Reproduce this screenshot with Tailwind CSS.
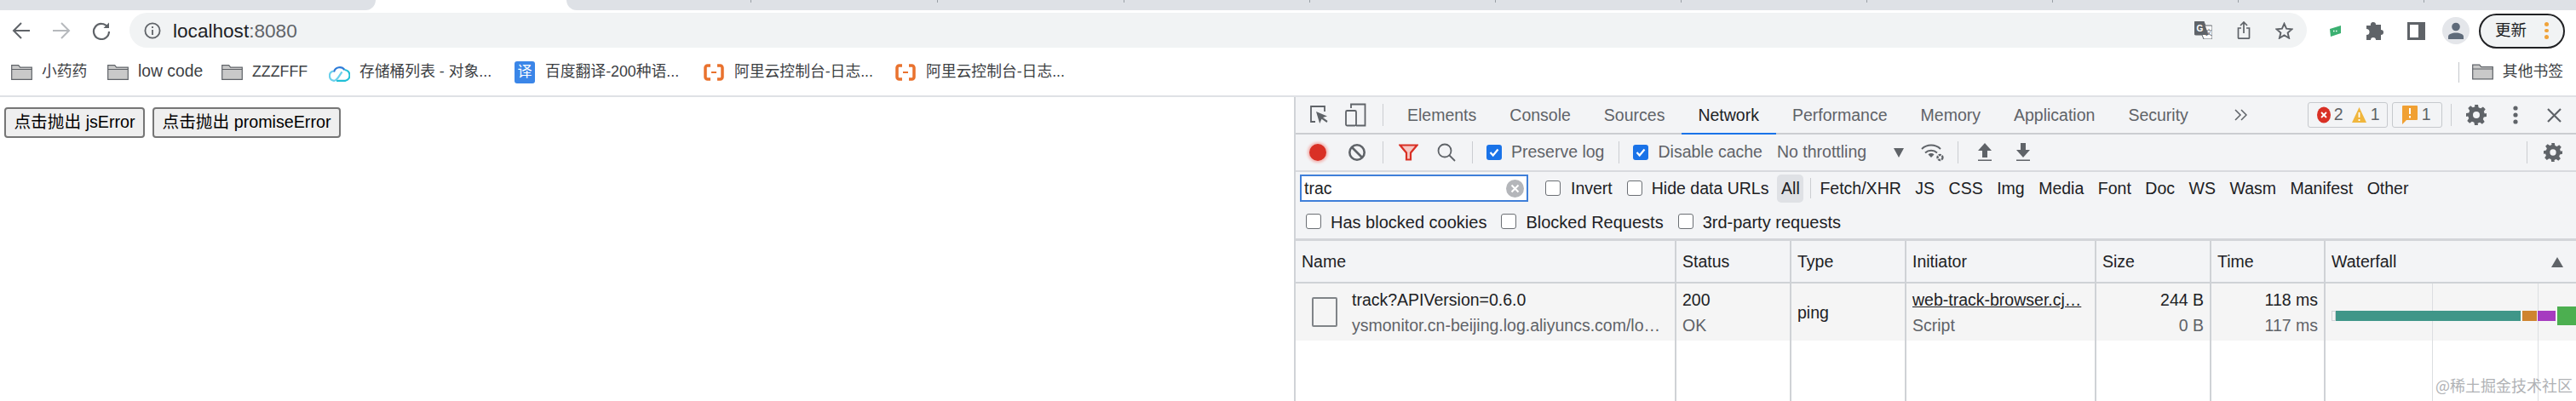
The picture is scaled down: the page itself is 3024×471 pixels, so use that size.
<!DOCTYPE html>
<html lang="zh">
<head>
<meta charset="utf-8">
<title>localhost:8080</title>
<script src="https://cdn.jsdelivr.net/npm/@tailwindcss/browser@4"></script>
</head>
<body class="w-[3024px] h-[471px] overflow-hidden bg-white font-['Liberation_Sans','Noto_Sans_CJK_SC',sans-serif] text-[#202124]">

<!-- tab strip -->
<div class="flex h-[12px] bg-white">
  <div class="w-[441px] bg-[#dee1e6] rounded-br-[14px]"></div>
  <div class="w-[224px]"></div>
  <div class="flex-1 flex bg-[#dee1e6] rounded-bl-[14px] overflow-hidden">
    <div class="w-[217px] h-[3px] shrink-0 border-r border-[#9aa0a6]"></div>
    <div class="w-[219px] h-[3px] shrink-0 border-r border-[#9aa0a6]"></div>
    <div class="w-[219px] h-[3px] shrink-0 border-r border-[#9aa0a6]"></div>
    <div class="w-[218px] h-[3px] shrink-0 border-r border-[#9aa0a6]"></div>
    <div class="w-[218px] h-[3px] shrink-0 border-r border-[#9aa0a6]"></div>
    <div class="w-[218px] h-[3px] shrink-0 border-r border-[#9aa0a6]"></div>
    <div class="w-[218px] h-[3px] shrink-0 border-r border-[#9aa0a6]"></div>
    <div class="w-[218px] h-[3px] shrink-0 border-r border-[#9aa0a6]"></div>
    <div class="w-[218px] h-[3px] shrink-0 border-r border-[#9aa0a6]"></div>
    <div class="w-[218px] h-[3px] shrink-0 border-r border-[#9aa0a6]"></div>
  </div>
</div>

<!-- toolbar -->
<div class="flex items-center h-[48px] pl-[14px]">
  <svg class="w-[22px] h-[22px] shrink-0" viewBox="0 0 22 22" fill="none" stroke="#5f6368" stroke-width="2"><path d="M21 11H2M11 2l-9 9 9 9"/></svg>
  <svg class="w-[22px] h-[22px] shrink-0 ml-[25px]" viewBox="0 0 22 22" fill="none" stroke="#b6b9bd" stroke-width="2"><path d="M1 11h19M11 2l9 9-9 9"/></svg>
  <svg class="w-[22px] h-[22px] shrink-0 ml-[25px]" viewBox="0 0 22 22" fill="none" stroke="#5f6368" stroke-width="2.2"><path d="M18.5 7A9 9 0 1 0 20 12"/><path d="M20 1.5V8h-6.5z" fill="#5f6368" stroke="none"/></svg>
  <!-- address bar -->
  <div class="flex items-center ml-[22px] w-[2556px] h-[41px] mt-[-1px] rounded-full bg-[#f1f3f4] pl-[17px]">
    <svg class="w-[20px] h-[20px] shrink-0" viewBox="0 0 20 20" fill="none" stroke="#5f6368" stroke-width="1.8"><circle cx="10" cy="10" r="8.6"/><path d="M10 9v6M10 5v2"/></svg>
    <div class="ml-[14px] pt-[2px] text-[22.6px]">localhost<span class="text-[#5f6368]">:8080</span></div>
    <svg class="w-[21px] h-[21px] shrink-0 ml-[2227px]" viewBox="0 0 21 21"><path d="M0 1.5A1.5 1.5 0 0 1 1.5 0H11l2 5H20a1 1 0 0 1 1 1v14a1 1 0 0 1-1 1H11l-2-5H1.500A1.500 1.500 0 0 1 0 14.500z" fill="#fff" stroke="#5f6368" stroke-width="1"/><path d="M0 1.500A1.500 1.500 0 0 1 1.500 0H11l5.500 16H1.500A1.500 1.500 0 0 1 0 14.500z" fill="#5f6368"/><text x="2.500" y="12" font-size="10" font-weight="700" fill="#fff" font-family="Liberation Sans">G</text><text x="13" y="16" font-size="8" fill="#5f6368" font-family="Noto Sans CJK SC">文</text></svg>
    <svg class="w-[16px] h-[21px] shrink-0 ml-[29px]" viewBox="0 0 16 21" fill="none" stroke="#5f6368" stroke-width="1.700"><path d="M5 8H1.500v11.500a.7.7 0 0 0 .7.7h11.600a.7.7 0 0 0 .7-.7V8H11"/><path d="M8 14V1.500M4 5l4-4 4 4"/></svg>
    <svg class="w-[21px] h-[20px] shrink-0 ml-[29px]" viewBox="0 0 21 20" fill="none" stroke="#5f6368" stroke-width="1.900"><path d="M10.500 1.800l2.600 5.900 6.300.6-4.800 4.200 1.500 6.200-5.600-3.300-5.600 3.300 1.500-6.200L1.600 8.300l6.300-.6z"/></svg>
  </div>
  <!-- extensions -->
  <svg class="w-[13px] h-[13px] shrink-0 ml-[27px]" viewBox="0 0 13 13"><path d="M0 4l13-4v9L1 13z" fill="#3bb071"/><path d="M4 6.500h1.500M7 6.500h1.500" stroke="#fff" stroke-width="1.300"/></svg>
  <svg class="w-[21px] h-[21px] shrink-0 ml-[30px]" viewBox="0 0 21 21"><path d="M8 0a3 3 0 0 1 3 3h6v6a3 3 0 0 1 0 6v6h-6a3 3 0 0 0-6 0H0v-6a3.500 3.500 0 0 0 0-7V4h5a3 3 0 0 1 3-4z" fill="#5f6368"/></svg>
  <svg class="w-[21px] h-[21px] shrink-0 ml-[27px]" viewBox="0 0 21 21"><path d="M0 0h21v21H0z" fill="#5f6368"/><path d="M3 3h10v15H3z" fill="#fff"/></svg>
  <div class="flex items-center justify-center w-[32px] h-[32px] ml-[20px] shrink-0 rounded-full bg-[#e4e6ea]">
    <svg class="w-[20px] h-[20px]" viewBox="0 0 20 20" fill="#5f6b7a"><circle cx="10" cy="5.500" r="4.800"/><path d="M1 20v-3c0-3 4.500-4.500 9-4.500s9 1.500 9 4.500v3z"/></svg>
  </div>
  <div class="flex items-center w-[101px] h-[41px] ml-[11px] shrink-0 rounded-full border-2 border-[#202124] bg-[#f1f3f4] pl-[17px]">
    <span class="text-[18.500px]">更新</span>
    <span class="flex flex-col gap-[3px] ml-[21px]">
      <span class="w-[4.500px] h-[4.500px] rounded-full bg-[#f0a33a]"></span>
      <span class="w-[4.500px] h-[4.500px] rounded-full bg-[#f0a33a]"></span>
      <span class="w-[4.500px] h-[4.500px] rounded-full bg-[#f0a33a]"></span>
    </span>
  </div>
</div>

<!-- bookmarks -->
<div class="flex items-center h-[54px] pl-[13px] pb-[3px] border-b-2 border-[#dfe1e5] text-[17.800px] text-[#3c4043]">
  <div class="flex items-center w-[113px] shrink-0 gap-[11px]">
    <svg class="w-[25px] h-[18px] shrink-0" viewBox="0 0 25 18"><path d="M.7 17.300V.7h8l2 2.500h13.600v14.100z" fill="#c9c9c9" stroke="#5f6368" stroke-width="1.200"/><path d="M1 5.500h23" stroke="#5f6368" stroke-width="1"/></svg>小药药
  </div>
  <div class="flex items-center w-[134px] shrink-0 gap-[11px]">
    <svg class="w-[25px] h-[18px] shrink-0" viewBox="0 0 25 18"><path d="M.7 17.300V.7h8l2 2.500h13.600v14.100z" fill="#c9c9c9" stroke="#5f6368" stroke-width="1.200"/><path d="M1 5.500h23" stroke="#5f6368" stroke-width="1"/></svg><span class="text-[19.300px]">low code</span>
  </div>
  <div class="flex items-center w-[126px] shrink-0 gap-[11px]">
    <svg class="w-[25px] h-[18px] shrink-0" viewBox="0 0 25 18"><path d="M.7 17.300V.7h8l2 2.500h13.600v14.100z" fill="#c9c9c9" stroke="#5f6368" stroke-width="1.200"/><path d="M1 5.500h23" stroke="#5f6368" stroke-width="1"/></svg>ZZZFFF
  </div>
  <div class="flex items-center w-[218px] shrink-0 gap-[11px]">
    <svg class="w-[25px] h-[22px] shrink-0" viewBox="0 0 25 22" fill="none" stroke-width="2.200"><path d="M6 10.500A7 7 0 0 1 18.500 8" stroke="#2d7bd8"/><path d="M18.500 8a6.500 6.500 0 0 1 1 12.800H9" stroke="#20bfd6"/><path d="M5 9.500A5.800 5.800 0 0 0 6 20.800c2.500 0 4-2 6.500-6l3-4.500" stroke="#6ad0ec"/></svg>存储桶列表 - 对象...
  </div>
  <div class="flex items-center w-[222px] shrink-0 gap-[12px]">
    <div class="flex items-center justify-center w-[24px] h-[26px] shrink-0 rounded-[3px] bg-[#3b86e8] text-white text-[17px]">译</div>百度翻译-200种语...
  </div>
  <div class="flex items-center w-[225px] shrink-0 gap-[12px]">
    <svg class="w-[24px] h-[20px] shrink-0" viewBox="0 0 24 20" fill="none" stroke="#e9722e"><path d="M8 2H4.500A2.500 2.500 0 0 0 2 4.500v11A2.500 2.500 0 0 0 4.500 18H8M16 2h3.500A2.500 2.500 0 0 1 22 4.500v11a2.500 2.500 0 0 1-2.500 2.500H16" stroke-width="3.500"/><path d="M9 10h6" stroke-width="2"/></svg>阿里云控制台-日志...
  </div>
  <div class="flex items-center w-[225px] shrink-0 gap-[12px]">
    <svg class="w-[24px] h-[20px] shrink-0" viewBox="0 0 24 20" fill="none" stroke="#e9722e"><path d="M8 2H4.500A2.500 2.500 0 0 0 2 4.500v11A2.500 2.500 0 0 0 4.500 18H8M16 2h3.500A2.500 2.500 0 0 1 22 4.500v11a2.500 2.500 0 0 1-2.500 2.500H16" stroke-width="3.500"/><path d="M9 10h6" stroke-width="2"/></svg>阿里云控制台-日志...
  </div>
  <div class="ml-auto flex items-center pr-[15px]">
    <div class="w-[1px] h-[24px] bg-[#c4c7cb] mr-[15px]"></div>
    <svg class="w-[25px] h-[19px] shrink-0 mr-[11px]" viewBox="0 0 25 18"><path d="M.7 17.300V.7h8l2 2.500h13.600v14.100z" fill="#c9c9c9" stroke="#5f6368" stroke-width="1.200"/><path d="M1 5.500h23" stroke="#5f6368" stroke-width="1"/></svg>其他书签
  </div>
</div>

<!-- content -->
<div class="flex h-[357px]">
  <!-- page -->
  <div class="w-[1519px] shrink-0 flex items-start gap-[9px] pl-[5px] pt-[12px]">
    <button class="h-[36px] w-[165px] shrink-0 border-2 border-[#767676] rounded-[4px] bg-[#efefef] text-black text-[19.700px] leading-none whitespace-nowrap">点击抛出 jsError</button>
    <button class="h-[36px] w-[221px] shrink-0 border-2 border-[#767676] rounded-[4px] bg-[#efefef] text-black text-[19.700px] leading-none whitespace-nowrap">点击抛出 promiseError</button>
  </div>

  <!-- devtools -->
  <div class="flex-1 flex flex-col bg-[#f3f4f6] border-l-2 border-[#d0d3d7] text-[19.500px] whitespace-nowrap min-w-0">
    <!-- tabs -->
    <div class="flex items-center h-[44px] shrink-0 border-b-2 border-[#cbcdd1] pl-[16px] text-[#5f6368]">
      <svg class="w-[22px] h-[24px] shrink-0" viewBox="0 0 22 24" fill="none" stroke="#5f6368" stroke-width="1.800"><path d="M7 20H2V2h16v6"/><path d="M8 8l4.200 14 2.300-5.300L20.500 21l1-2-5.500-4 5-1.500z" fill="#5f6368" stroke="none"/></svg>
      <svg class="w-[25px] h-[28px] shrink-0 ml-[20px]" viewBox="0 0 25 28" fill="none" stroke="#5f6368" stroke-width="1.800"><path d="M7 6V1.500h16.500v25H13"/><rect x="1" y="9" width="12" height="17.500" rx="1.500"/></svg>
      <div class="w-[1px] h-[26px] bg-[#cbcdd1] ml-[19px] mr-[28px]"></div>
      <div class="flex h-full gap-[39px] pt-[2px]">
        <div class="flex items-center">Elements</div>
        <div class="flex items-center">Console</div>
        <div class="flex items-center">Sources</div>
        <div class="relative flex items-center text-[#202124]">Network<div class="absolute -left-[19px] -right-[20px] bottom-[-2px] h-[2px] bg-[#1a73e8]"></div></div>
        <div class="flex items-center">Performance</div>
        <div class="flex items-center">Memory</div>
        <div class="flex items-center">Application</div>
        <div class="flex items-center">Security</div>
      </div>
      <svg class="w-[15px] h-[14px] shrink-0 ml-[54px]" viewBox="0 0 15 14" fill="none" stroke="#5f6368" stroke-width="1.500"><path d="M1 1l6 6-6 6M8 1l6 6-6 6"/></svg>
      <div class="flex items-center w-[94px] h-[30px] ml-[71px] shrink-0 border border-[#c6c9cd] rounded-[3px] pl-[10px]">
        <svg class="w-[16px] h-[20px] shrink-0" viewBox="0 0 16 20"><ellipse cx="8" cy="10" rx="8" ry="9.500" fill="#d93025"/><path d="M5 7l6 6M11 7l-6 6" stroke="#fff" stroke-width="1.800"/></svg>
        <span class="ml-[4px]">2</span>
        <svg class="w-[17px] h-[18px] shrink-0 ml-[10px]" viewBox="0 0 17 18"><path d="M8.500 0L17 18H0z" fill="#f0b63d"/><path d="M8.500 6v6M8.500 14v2" stroke="#fff" stroke-width="1.800"/></svg>
        <span class="ml-[5px]">1</span>
      </div>
      <div class="flex items-center w-[59px] h-[30px] ml-[5px] shrink-0 border border-[#c6c9cd] rounded-[3px] pl-[11px]">
        <svg class="w-[18px] h-[22px] shrink-0" viewBox="0 0 18 22"><path d="M1 0h16a1 1 0 0 1 1 1v15a1 1 0 0 1-1 1H5l-5 5V1a1 1 0 0 1 1-1z" fill="#f0a033"/><path d="M9 3v7M9 12v2.500" stroke="#fff" stroke-width="2"/></svg>
        <span class="ml-[5px]">1</span>
      </div>
      <div class="w-[1px] h-[26px] bg-[#cbcdd1] ml-[10px] shrink-0"></div>
      <svg class="w-[24px] h-[24px] shrink-0 ml-[17px]" viewBox="0 0 24 24"><path fill="#5f6368" fill-rule="evenodd" d="M10 0h4l.6 3.300 2.500 1 2.800-1.900 2.800 2.800-1.900 2.800 1 2.500L24 10v4l-3.200.6-1 2.500 1.900 2.800-2.800 2.800-2.800-1.900-2.500 1L14 24h-4l-.6-3.200-2.500-1-2.800 1.900-2.800-2.800 1.900-2.800-1-2.500L0 14v-4l3.200-.6 1-2.500-1.900-2.800 2.800-2.800 2.800 1.900 2.500-1zM12 8a4 4 0 1 0 0 8 4 4 0 0 0 0-8z"/></svg>
      <svg class="w-[6px] h-[22px] shrink-0 ml-[31px]" viewBox="0 0 6 22" fill="#5f6368"><circle cx="3" cy="3" r="2.600"/><circle cx="3" cy="11" r="2.600"/><circle cx="3" cy="19" r="2.600"/></svg>
      <svg class="w-[17px] h-[17px] shrink-0 ml-[34px]" viewBox="0 0 17 17" fill="none" stroke="#5f6368" stroke-width="2.200"><path d="M1 1l15 15M16 1L1 16"/></svg>
    </div>
    <!-- network controls -->
    <div class="flex items-center h-[44px] shrink-0 border-b-2 border-[#d8dade] pl-[16px] text-[#5f6368]">
      <span class="w-[20px] h-[20px] shrink-0 rounded-full bg-[#d93025] shadow-[0_0_3px_2px_#f2b8b5]"></span>
      <svg class="w-[22px] h-[22px] shrink-0 ml-[25px]" viewBox="0 0 22 22" fill="none" stroke="#5f6368" stroke-width="2.600"><circle cx="11" cy="11" r="8.700"/><path d="M5 5l12 12"/></svg>
      <div class="w-[1px] h-[26px] bg-[#cbcdd1] ml-[19px] shrink-0"></div>
      <svg class="w-[23px] h-[20px] shrink-0 ml-[18px]" viewBox="0 0 23 20" fill="none" stroke="#d93025" stroke-width="2.200"><path d="M1.500 1.500h20L14 10.500v8H9v-8z" fill="#f7c9c5"/></svg>
      <svg class="w-[22px] h-[22px] shrink-0 ml-[22px]" viewBox="0 0 22 22" fill="none" stroke="#5f6368" stroke-width="1.800"><circle cx="9" cy="9" r="7.500"/><path d="M14 14l7 7"/></svg>
      <div class="w-[1px] h-[26px] bg-[#cbcdd1] ml-[19px] shrink-0"></div>
      <span class="flex items-center justify-center w-[18px] h-[18px] shrink-0 ml-[16px] rounded-[3px] bg-[#1a73e8]"><svg class="w-[14px] h-[14px]" viewBox="0 0 14 14" fill="none" stroke="#fff" stroke-width="2.200"><path d="M2.500 7l3.200 3.500 5.800-7"/></svg></span>
      <span class="ml-[11px]">Preserve log</span>
      <div class="w-[1px] h-[26px] bg-[#cbcdd1] ml-[17px] shrink-0"></div>
      <span class="flex items-center justify-center w-[18px] h-[18px] shrink-0 ml-[16px] rounded-[3px] bg-[#1a73e8]"><svg class="w-[14px] h-[14px]" viewBox="0 0 14 14" fill="none" stroke="#fff" stroke-width="2.200"><path d="M2.500 7l3.200 3.500 5.800-7"/></svg></span>
      <span class="ml-[11px]">Disable cache</span>
      <span class="ml-[17px]">No throttling</span>
      <svg class="w-[12px] h-[11px] shrink-0 ml-[32px]" viewBox="0 0 12 11" fill="#5f6368"><path d="M0 0h12L6 11z"/></svg>
      <svg class="w-[28px] h-[24px] shrink-0 ml-[20px]" viewBox="0 0 28 24" fill="none" stroke="#5f6368" stroke-width="2"><path d="M1 8a16 16 0 0 1 22 0M5 12.500a10.500 10.500 0 0 1 14 0"/><path d="M12 18l-3.500-3.500a5 5 0 0 1 7 0z" fill="#5f6368" stroke="none"/><circle cx="22.500" cy="18" r="3" stroke-width="2.400" stroke-dasharray="3 1"/></svg>
      <div class="w-[1px] h-[26px] bg-[#cbcdd1] ml-[15px] shrink-0"></div>
      <svg class="w-[18px] h-[22px] shrink-0 ml-[22px]" viewBox="0 0 18 22" fill="#5f6368"><path d="M9 0l8 9h-5v8H6V9H1zM1 19.500h16V21H1z"/></svg>
      <svg class="w-[18px] h-[22px] shrink-0 ml-[27px]" viewBox="0 0 18 22" fill="#5f6368"><path d="M6 0h6v8h5l-8 9-8-9h5zM1 19.500h16V21H1z"/></svg>
      <div class="w-[1px] h-[26px] bg-[#cbcdd1] ml-[582px] shrink-0"></div>
      <svg class="w-[22px] h-[24px] shrink-0 ml-[19px]" viewBox="0 0 24 24"><path fill="#5f6368" fill-rule="evenodd" d="M10 0h4l.6 3.300 2.500 1 2.800-1.900 2.800 2.800-1.900 2.800 1 2.500L24 10v4l-3.200.6-1 2.500 1.900 2.800-2.800 2.800-2.800-1.900-2.500 1L14 24h-4l-.6-3.200-2.500-1-2.800 1.900-2.800-2.800 1.900-2.800-1-2.500L0 14v-4l3.200-.6 1-2.500-1.900-2.800 2.800-2.800 2.800 1.900 2.500-1zM12 8a4 4 0 1 0 0 8 4 4 0 0 0 0-8z"/></svg>
    </div>
    <!-- filter rows -->
    <div class="flex flex-col h-[81px] shrink-0 border-b-[3px] border-[#d3d5d9] pl-[5px]">
      <div class="flex items-center h-[38px] shrink-0 text-[#202124]">
        <div class="flex items-center justify-between w-[268px] h-[32px] shrink-0 border-2 border-[#3f7fd9] bg-white pl-[3px] pr-[3px]"><span class="pt-[2px]">trac</span><svg class="w-[21px] h-[21px] shrink-0" viewBox="0 0 21 21"><circle cx="10.500" cy="10.500" r="10.500" fill="#b4b6ba"/><path d="M6.500 6.500l8 8M14.500 6.500l-8 8" stroke="#fff" stroke-width="2"/></svg></div>
        <span class="w-[18px] h-[18px] shrink-0 ml-[20px] border-[1.500px] border-[#6b6f74] bg-white rounded-[3px]"></span>
        <span class="ml-[12px] pt-[2px]">Invert</span>
        <span class="w-[18px] h-[18px] shrink-0 ml-[17px] border-[1.500px] border-[#6b6f74] bg-white rounded-[3px]"></span>
        <span class="ml-[11px] pt-[2px]">Hide data URLs</span>
        <span class="flex items-center justify-center w-[31px] h-[33px] ml-[10px] pt-[2px] rounded-[5px] bg-[#dfe1e5]">All</span>
        <div class="w-[1px] h-[24px] bg-[#cbcdd1] ml-[8px] mr-[10px] shrink-0"></div>
        <div class="flex gap-[16.500px] pt-[2px]"><span>Fetch/XHR</span><span>JS</span><span>CSS</span><span>Img</span><span>Media</span><span>Font</span><span>Doc</span><span>WS</span><span>Wasm</span><span>Manifest</span><span>Other</span></div>
      </div>
      <div class="flex items-center flex-1 pl-[7px] text-[#202124] text-[20px]">
        <span class="w-[18px] h-[18px] shrink-0 border-[1.500px] border-[#6b6f74] bg-white rounded-[3px]"></span>
        <span class="ml-[11px] pt-[2px]">Has blocked cookies</span>
        <span class="w-[18px] h-[18px] shrink-0 ml-[17px] border-[1.500px] border-[#6b6f74] bg-white rounded-[3px]"></span>
        <span class="ml-[11px] pt-[2px]">Blocked Requests</span>
        <span class="w-[18px] h-[18px] shrink-0 ml-[17px] border-[1.500px] border-[#6b6f74] bg-white rounded-[3px]"></span>
        <span class="ml-[11px] pt-[2px]">3rd-party requests</span>
      </div>
    </div>
    <!-- table -->
    <div class="flex-1 min-h-0 grid grid-cols-[447px_135px_135px_223px_135px_134px_1fr] grid-rows-[50px_67px_1fr] bg-white">
      <div class="flex items-center pl-[7px] pt-[2px] bg-[#f3f4f6] border-r-2 border-b-2 border-[#cfd2d6]">Name</div>
      <div class="flex items-center pl-[7px] pt-[2px] bg-[#f3f4f6] border-r-2 border-b-2 border-[#cfd2d6]">Status</div>
      <div class="flex items-center pl-[7px] pt-[2px] bg-[#f3f4f6] border-r-2 border-b-2 border-[#cfd2d6]">Type</div>
      <div class="flex items-center pl-[7px] pt-[2px] bg-[#f3f4f6] border-r-2 border-b-2 border-[#cfd2d6]">Initiator</div>
      <div class="flex items-center pl-[7px] pt-[2px] bg-[#f3f4f6] border-r-2 border-b-2 border-[#cfd2d6]">Size</div>
      <div class="flex items-center pl-[7px] pt-[2px] bg-[#f3f4f6] border-r-2 border-b-2 border-[#cfd2d6]">Time</div>
      <div class="flex items-center justify-between pl-[7px] pr-[15px] pt-[2px] bg-[#f3f4f6] border-b-2 border-[#cfd2d6]">Waterfall<svg class="w-[14px] h-[12px]" viewBox="0 0 14 12" fill="#5f6368"><path d="M7 0l7 12H0z"/></svg></div>

      <div class="flex items-center bg-[#f5f5f5] border-r-2 border-[#cfd2d6] pl-[19px]">
        <span class="w-[30px] h-[35px] shrink-0 border-2 border-[#808488] rounded-[2px] bg-[#f5f5f5]"></span>
        <div class="flex flex-col gap-[7px] ml-[17px] pt-[2px] leading-[23px]"><span>track?APIVersion=0.6.0</span><span class="text-[#5f6368]">ysmonitor.cn-beijing.log.aliyuncs.com/lo…</span></div>
      </div>
      <div class="flex flex-col justify-center gap-[7px] leading-[23px] pl-[7px] pt-[2px] bg-[#f5f5f5] border-r-2 border-[#cfd2d6]"><span>200</span><span class="text-[#5f6368]">OK</span></div>
      <div class="flex items-center pl-[7px] pt-[2px] bg-[#f5f5f5] border-r-2 border-[#cfd2d6]">ping</div>
      <div class="flex flex-col justify-center gap-[7px] leading-[23px] pl-[7px] pt-[2px] bg-[#f5f5f5] border-r-2 border-[#cfd2d6]"><span class="underline">web-track-browser.cj…</span><span class="text-[#5f6368]">Script</span></div>
      <div class="flex flex-col justify-center items-end gap-[7px] leading-[23px] pr-[7px] pt-[2px] bg-[#f5f5f5] border-r-2 border-[#cfd2d6]"><span>244 B</span><span class="text-[#5f6368]">0 B</span></div>
      <div class="flex flex-col justify-center items-end gap-[7px] leading-[23px] pr-[7px] pt-[2px] bg-[#f5f5f5] border-r-2 border-[#cfd2d6]"><span>118 ms</span><span class="text-[#5f6368]">117 ms</span></div>
      <div class="row-span-2 relative overflow-hidden">
        <div class="absolute inset-x-0 top-0 h-[67px] bg-[#f5f5f5]"></div>
        <div class="absolute top-0 bottom-0 left-[125px] w-[1px] bg-[#dcdee1]"></div>
        <div class="absolute top-0 bottom-0 left-[249px] w-[1px] bg-[#dcdee1]"></div>
        <div class="absolute flex items-center top-[21px] h-[34px] left-[7px]">
          <span class="w-[5px] h-[12px] border border-[#cfd2d6] bg-[#f5f5f5] shrink-0"></span>
          <span class="w-[217px] h-[12px] bg-[#3f9688] shrink-0"></span>
          <span class="w-[17px] h-[12px] ml-[2px] bg-[#cf842f] shrink-0"></span>
          <span class="w-[21px] h-[12px] ml-[1px] bg-[#a63bc0] shrink-0"></span>
          <span class="w-[30px] h-[22px] ml-[2px] bg-[#4caf50] shrink-0"></span>
        </div>
        <div class="absolute left-[129px] top-[110px] text-[18px] leading-none text-[#b0b2b5] font-['Noto_Sans_CJK_SC',sans-serif]">@稀土掘金技术社区</div>
      </div>

      <div class="border-r-2 border-[#cfd2d6]"></div>
      <div class="border-r-2 border-[#cfd2d6]"></div>
      <div class="border-r-2 border-[#cfd2d6]"></div>
      <div class="border-r-2 border-[#cfd2d6]"></div>
      <div class="border-r-2 border-[#cfd2d6]"></div>
      <div class="border-r-2 border-[#cfd2d6]"></div>
    </div>
  </div>
</div>
</body>
</html>
